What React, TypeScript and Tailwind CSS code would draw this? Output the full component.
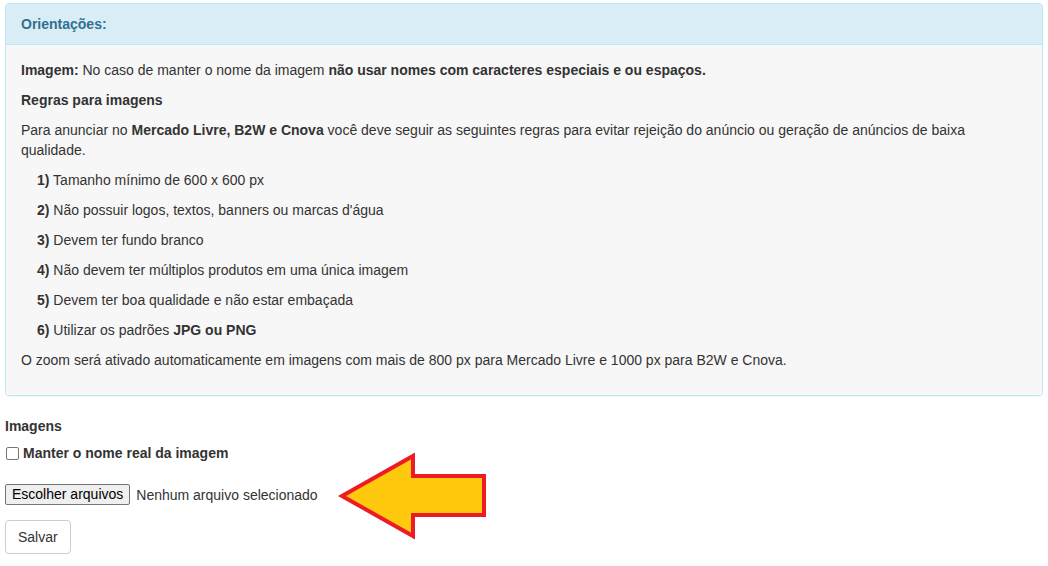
export default function App() {
    const rules = [
        { n: '1)', text: <>Tamanho mínimo de 600 x 600 px</> },
        { n: '2)', text: <>Não possuir logos, textos, banners ou marcas d'água</> },
        { n: '3)', text: <>Devem ter fundo branco</> },
        { n: '4)', text: <>Não devem ter múltiplos produtos em uma única imagem</> },
        { n: '5)', text: <>Devem ter boa qualidade e não estar embaçada</> },
        { n: '6)', text: <>Utilizar os padrões <b>JPG ou PNG</b></> },
    ];

    return (
        <div className="min-h-screen bg-white px-[5px] pt-[3px] text-[14px] leading-[20px] text-[#333] font-['Liberation_Sans',Arial,sans-serif]">
            {/* Panel (info) */}
            <div className="rounded-[4px] border border-[#bce8f1] shadow-[0_1px_1px_rgba(0,0,0,0.05)]">
                <div className="rounded-t-[3px] border-b border-[#bce8f1] bg-[#d9edf7] px-[15px] py-[10px] font-bold text-[#31708f]">
                    Orientações:
                </div>
                <div className="rounded-b-[3px] bg-[#f7f7f7] p-[15px]">
                    <p className="mb-[10px]">
                        <b>Imagem:</b> No caso de manter o nome da imagem <b>não usar nomes com caracteres especiais e ou espaços.</b>
                    </p>
                    <p className="mb-[10px] font-bold">Regras para imagens</p>
                    <p className="mb-[10px]">
                        Para anunciar no <b>Mercado Livre, B2W e Cnova</b> você deve seguir as seguintes regras para evitar rejeição do anúncio ou geração de anúncios de baixa qualidade.
                    </p>
                    {rules.map((r) => (
                        <p key={r.n} className="mb-[10px] pl-[16px]">
                            <b>{r.n}</b> {r.text}
                        </p>
                    ))}
                    <p className="mb-[10px]">
                        O zoom será ativado automaticamente em imagens com mais de 800 px para Mercado Livre e 1000 px para B2W e Cnova.
                    </p>
                </div>
            </div>

            {/* Form */}
            <div className="mt-[20px]">
                <div className="font-bold">Imagens</div>
                <label className="mt-[7px] flex items-center gap-[4px] font-bold">
                    <span className="ml-[1px] block h-[13px] w-[13px] rounded-[2px] border border-[#767676] bg-white" />
                    Manter o nome real da imagem
                </label>
                <div className="relative mt-[21px] flex items-center">
                    <button className="h-[21px] rounded-[2px] border border-[#767676] bg-[#efefef] px-[6px] text-[14px] leading-[19px] text-black">
                        Escolher arquivos
                    </button>
                    <span className="ml-[6px] text-[14px] text-[#333]">Nenhum arquivo selecionado</span>
                    {/* Arrow pointing at the file input */}
                    <svg className="absolute left-[325px] top-[-44px]" width="170" height="110" viewBox="0 0 170 110">
                        <polygon
                            points="12,56 83,16 83,36 154,36 154,75 83,75 83,96"
                            fill="#ffc90e"
                            stroke="#ed1c24"
                            strokeWidth="4"
                            strokeLinejoin="miter"
                        />
                    </svg>
                </div>
                <button className="mt-[15px] h-[34px] rounded-[4px] border border-[#ccc] bg-white px-[12px] text-[14px] text-[#333]">
                    Salvar
                </button>
            </div>
        </div>
    );
}
